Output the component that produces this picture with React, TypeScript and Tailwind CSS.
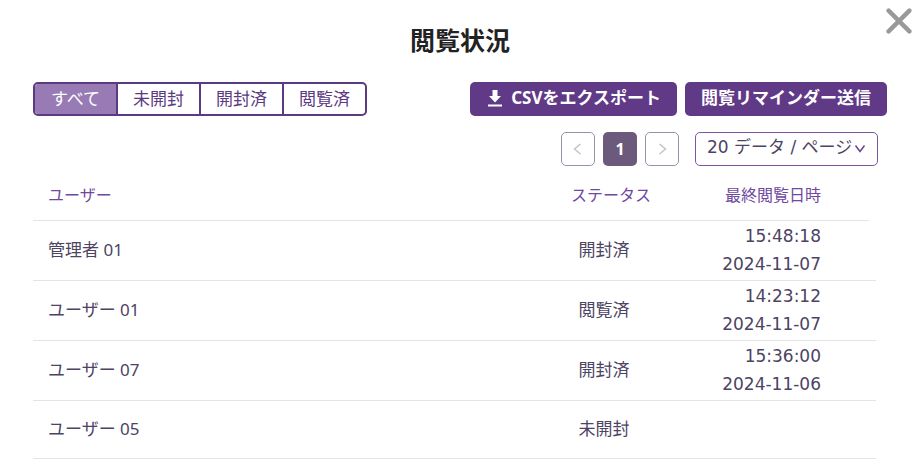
const tabs = ["すべて", "未開封", "開封済", "閲覧済"];

const rows = [
  { user: "管理者 01", status: "開封済", time: "15:48:18", date: "2024-11-07" },
  { user: "ユーザー 01", status: "閲覧済", time: "14:23:12", date: "2024-11-07" },
  { user: "ユーザー 07", status: "開封済", time: "15:36:00", date: "2024-11-06" },
  { user: "ユーザー 05", status: "未開封", time: "", date: "" },
];

function Chevron({ d, className }: { d: string; className: string }) {
  return (
    <svg viewBox="0 0 12 12" className={className} fill="none" stroke="currentColor" strokeWidth="1.5" aria-hidden="true">
      <path d={d} />
    </svg>
  );
}

export default function App() {
  return (
    <main className="relative bg-white pr-8 pl-[33px] font-['Noto_Sans','Noto_Sans_CJK_JP',sans-serif] text-[17px] text-[#4d4363]">
      <button type="button" aria-label="閉じる" className="absolute top-2 right-[7px] text-[#999999]">
        <svg viewBox="0 0 26 26" className="block size-[26px]" stroke="currentColor" strokeWidth="4.4" strokeLinecap="round" aria-hidden="true">
          <path d="M2.6 2.6 23.4 23.4M23.4 2.6 2.6 23.4" />
        </svg>
      </button>

      <h1 className="pt-6 text-center text-[25px] leading-8 font-bold text-[#222222]">閲覧状況</h1>

      <div className="mt-[26px] flex items-start justify-between">
        <div className="flex h-[34px] overflow-hidden rounded-[5px] border-2 border-[#5b3a82]">
          {tabs.map((tab, i) => (
            <button
              key={tab}
              type="button"
              aria-pressed={i === 0}
              className={
                i === 0
                  ? "w-[81px] bg-[#987bb5] leading-7 text-white"
                  : "w-[83px] border-l-2 border-[#5b3a82] leading-7 text-[#5b3a82]"
              }
            >
              {tab}
            </button>
          ))}
        </div>
        <div className="flex gap-2 font-bold text-white">
          <button type="button" className="flex h-[34px] items-center rounded-[5px] bg-[#613a87] pr-4 pb-0.5 pl-[18px]">
            <svg viewBox="0 0 14 17" className="mr-[9px] h-[17px] w-[14px]" fill="currentColor" aria-hidden="true">
              <path d="M4.5 0h5v6H13L7 12.5 1 6h3.5zM0 14.5h14v2H0z" />
            </svg>
            CSVをエクスポート
          </button>
          <button type="button" className="flex h-[34px] items-center rounded-[5px] bg-[#613a87] px-4 pb-0.5">
            閲覧リマインダー送信
          </button>
        </div>
      </div>

      <div className="mt-4 flex justify-end gap-2 pr-[9px]">
        <button type="button" aria-label="前のページ" className="flex size-[34px] items-center justify-center rounded-[5px] border border-[#9c90a8] text-[#c4c4c4]">
          <Chevron d="M8.5 1 2.500 6l6 5" className="size-3" />
        </button>
        <button type="button" aria-current="page" className="size-[34px] rounded-[5px] bg-[#6b5a7b] text-base font-bold text-white">
          1
        </button>
        <button type="button" aria-label="次のページ" className="flex size-[34px] items-center justify-center rounded-[5px] border border-[#9c90a8] text-[#c4c4c4]">
          <Chevron d="M3.500 1 9.500 6l-6 5" className="size-3" />
        </button>
        <div className="relative ml-2">
          <select
            aria-label="1ページの件数"
            className="h-[34px] w-[183px] appearance-none rounded-[5px] border border-[#7d54a3] bg-white pb-0.5 pl-[11px] font-['DejaVu_Sans','Noto_Sans_CJK_JP',sans-serif] text-[17px]"
          >
            <option>20 データ / ページ</option>
          </select>
          <Chevron d="M1.500 2.500 6 8.500l4.500-6" className="pointer-events-none absolute top-[11px] right-3 size-3 text-[#6b4490]" />
        </div>
      </div>

      <div className="pr-[11px]">
        <table className="w-full table-fixed border-separate border-spacing-0">
          <colgroup>
            <col />
            <col className="w-[120px]" />
            <col className="w-[205px]" />
            <col className="w-[7px]" />
          </colgroup>
          <thead>
            <tr className="h-[55px] text-base text-[#7048a0]">
              <th scope="col" className="border-b border-[#e4e4e4] px-[15px] pt-1 text-left font-normal">ユーザー</th>
              <th scope="col" className="border-b border-[#e4e4e4] pt-1 pl-3.5 text-center font-normal">ステータス</th>
              <th scope="col" className="border-b border-[#e4e4e4] pt-1 pr-12 text-right font-normal">最終閲覧日時</th>
              <td />
            </tr>
          </thead>
          <tbody>
            {rows.map((row) => (
              <tr key={row.user} className={row.date ? "h-[60px]" : "h-[58px]"}>
                <td className="border-b border-[#e4e4e4] px-[15px] pb-0.5">{row.user}</td>
                <td className="border-b border-[#e4e4e4] pb-0.5 text-center">{row.status}</td>
                <td className="border-b border-[#e4e4e4] pr-12 pb-0.5 text-right font-['DejaVu_Sans',sans-serif] leading-7">
                  <div>{row.time}</div>
                  <div>{row.date}</div>
                </td>
                <td className="border-b border-[#e4e4e4]" />
              </tr>
            ))}
          </tbody>
        </table>
      </div>
    </main>
  );
}
